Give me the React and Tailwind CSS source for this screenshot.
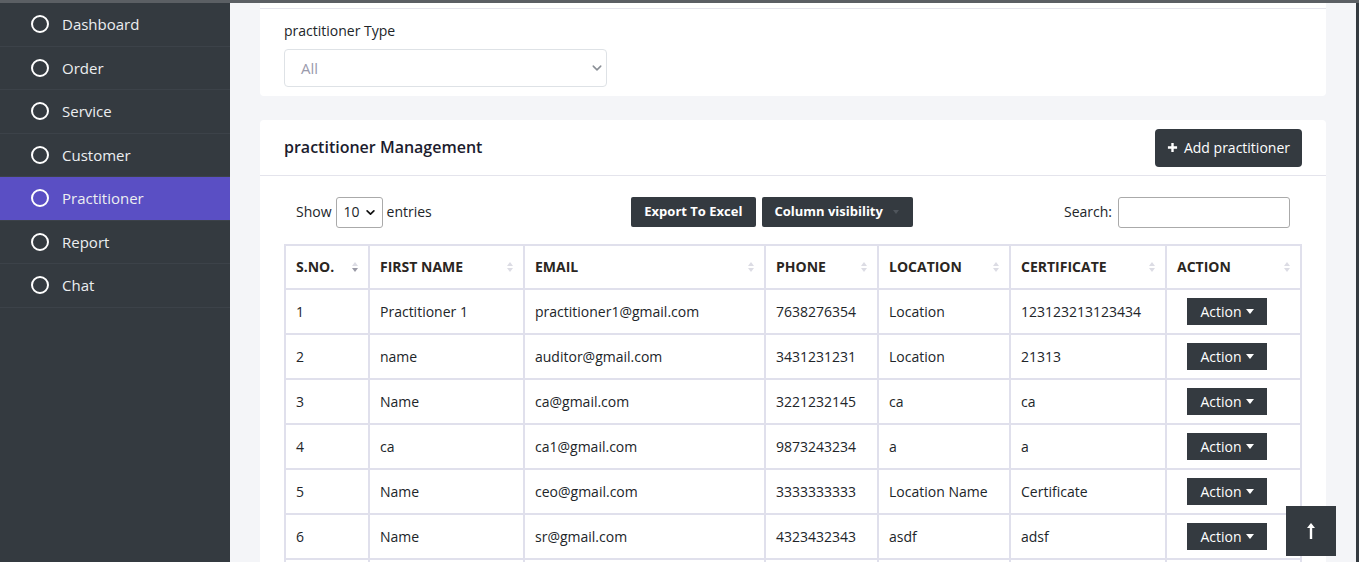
import React from 'react';

const menu = ['Dashboard', 'Order', 'Service', 'Customer', 'Practitioner', 'Report', 'Chat'];

const columns = [
  { label: 'S.NO.', w: 'w-[84px]', active: true },
  { label: 'FIRST NAME', w: 'w-[155px]' },
  { label: 'EMAIL', w: 'w-[241px]' },
  { label: 'PHONE', w: 'w-[113px]' },
  { label: 'LOCATION', w: 'w-[132px]' },
  { label: 'CERTIFICATE', w: 'w-[156px]' },
  { label: 'ACTION', w: '' },
];

const rows = [
  ['1', 'Practitioner 1', 'practitioner1@gmail.com', '7638276354', 'Location', '123123213123434'],
  ['2', 'name', 'auditor@gmail.com', '3431231231', 'Location', '21313'],
  ['3', 'Name', 'ca@gmail.com', '3221232145', 'ca', 'ca'],
  ['4', 'ca', 'ca1@gmail.com', '9873243234', 'a', 'a'],
  ['5', 'Name', 'ceo@gmail.com', '3333333333', 'Location Name', 'Certificate'],
  ['6', 'Name', 'sr@gmail.com', '4323432343', 'asdf', 'adsf'],
  ['7', 'Name', 'test@gmail.com', '1234567890', 'Location', 'Certificate'],
];

const SortIcon = ({ active }) => (
  <span className="flex flex-col items-center gap-[2px]">
    <span className="w-0 h-0 border-l-[3px] border-r-[3px] border-b-[4px] border-l-transparent border-r-transparent border-b-[#dcdce4]"></span>
    <span className={`w-0 h-0 border-l-[3px] border-r-[3px] border-t-[4px] border-l-transparent border-r-transparent ${active ? 'border-t-[#9a9aa6]' : 'border-t-[#dcdce4]'}`}></span>
  </span>
);

const Caret = ({ color = 'border-t-white' }) => (
  <span className={`inline-block w-0 h-0 border-l-[4px] border-r-[4px] border-t-[5px] border-l-transparent border-r-transparent ${color}`}></span>
);

const Sidebar = () => (
  <div className="w-[230px] shrink-0 bg-[#343a40]">
    {menu.map((item) => (
      <div
        key={item}
        className={`h-[43.5px] flex items-center border-b border-[#3c4249] ${item === 'Practitioner' ? 'bg-[#5a4fc4]' : ''}`}
      >
        <span className="ml-[31px] w-[18px] h-[18px] rounded-full border-2 border-white"></span>
        <span className="ml-[13px] text-[15px] text-[#eceef0]">{item}</span>
      </div>
    ))}
  </div>
);

export default function App() {
  return (
    <div className="h-[562px] overflow-hidden flex flex-col font-['Open_Sans',sans-serif] relative">
      <div className="h-[3px] bg-[#5b5f64] shrink-0"></div>
      <div className="flex flex-1 min-h-0">
        <Sidebar />
        <div className="flex-1 min-w-0 bg-[#f4f5f8] px-[30px]">
          {/* filter card */}
          <div className="bg-white rounded-b-[4px]">
            <div className="h-[6px] border-b border-[#e4e4ec]"></div>
            <div className="pt-[11px] px-6 pb-[9px]">
              <div className="text-sm leading-[21px] text-[#212529]">practitioner Type</div>
              <div className="mt-[8px] w-[323px] h-[38px] border border-[#dee2e6] rounded-[4px] flex items-center justify-between pl-4 pr-[4px]">
                <span className="text-[15px] text-[#9a9aac]">All</span>
                <svg width="10" height="10" viewBox="0 0 16 16">
                  <path d="M2 5l6 6 6-6" fill="none" stroke="#8a8f96" strokeWidth="2.4" strokeLinecap="round" strokeLinejoin="round" />
                </svg>
              </div>
            </div>
          </div>

          {/* management card */}
          <div className="bg-white rounded-[4px] mt-6">
            <div className="h-[56px] border-b border-[#e4e4ec] px-6 flex items-center justify-between">
              <h2 className="text-base font-semibold text-[#1c1c2e] -mt-[2px]">practitioner Management</h2>
              <button className="h-[38px] px-3 bg-[#343a40] rounded-[4px] text-white text-sm flex items-center gap-[6px]">
                <svg width="11" height="11" viewBox="0 0 12 12">
                  <path d="M6 1v10M1 6h10" stroke="white" strokeWidth="2.6" />
                </svg>
                Add practitioner
              </button>
            </div>

            <div className="px-6 pt-5">
              <div className="grid grid-cols-3 items-center px-3 h-[32px] mb-[16px]">
                <div className="flex items-center text-sm text-[#212529]">
                  <span>Show</span>
                  <span className="mx-1 w-[47px] h-[31px] border border-[#aaa] rounded-[3px] flex items-center justify-between px-[7px]">
                    <span>10</span>
                    <svg width="9" height="9" viewBox="0 0 16 16">
                      <path d="M2 5l6 6 6-6" fill="none" stroke="#111" strokeWidth="3" strokeLinecap="round" strokeLinejoin="round" />
                    </svg>
                  </span>
                  <span>entries</span>
                </div>
                <div className="flex items-center gap-[6px] pl-[4px]">
                  <button className="h-[30px] pl-[13px] pr-[14px] bg-[#343a40] rounded-[2px] text-white text-[13px] font-bold">Export To Excel</button>
                  <button className="h-[30px] pl-[12px] pr-[14px] bg-[#343a40] rounded-[2px] text-white text-[13px] font-bold flex items-center gap-[10px]">
                    Column visibility
                    <span className="inline-block w-0 h-0 border-l-[3px] border-r-[3px] border-t-[4px] border-l-transparent border-r-transparent border-t-[#4f555c]"></span>
                  </button>
                </div>
                <div className="flex items-center justify-end text-sm text-[#212529]">
                  <span className="mr-[6px]">Search:</span>
                  <span className="w-[172px] h-[31px] border border-[#aaa] rounded-[3px]"></span>
                </div>
              </div>

              <table className="w-full border-collapse text-sm text-[#212529] table-fixed">
                <thead>
                  <tr>
                    {columns.map((c) => (
                      <th key={c.label} className={`${c.w} h-[44px] border-2 border-[#e0e0ec] px-[10px] text-left`}>
                        <div className="flex items-center justify-between">
                          <span className="font-bold text-[#2b2622]">{c.label}</span>
                          <SortIcon active={c.active} />
                        </div>
                      </th>
                    ))}
                  </tr>
                </thead>
                <tbody>
                  {rows.map((r) => (
                    <tr key={r[0]}>
                      {r.map((cell, i) => (
                        <td key={i} className="h-[45px] border-2 border-[#e0e0ec] px-[10px]">{cell}</td>
                      ))}
                      <td className="h-[45px] border-2 border-[#e0e0ec] pl-[20px]">
                        <button className="h-[27px] w-[80px] bg-[#343a40] text-white text-sm flex items-center justify-center gap-[4px]">
                          Action
                          <Caret />
                        </button>
                      </td>
                    </tr>
                  ))}
                </tbody>
              </table>
            </div>
          </div>
        </div>
        <div className="w-[3px] bg-[#343a40] shrink-0"></div>
      </div>

      <button className="absolute right-[23px] bottom-[6px] w-[50px] h-[50px] bg-[#343a40] flex items-center justify-center">
        <svg width="12" height="18" viewBox="0 0 12 18">
          <path d="M6 17V3" stroke="white" strokeWidth="2.4" />
          <path d="M2 6l4-5 4 5z" fill="white" />
        </svg>
      </button>
    </div>
  );
}
